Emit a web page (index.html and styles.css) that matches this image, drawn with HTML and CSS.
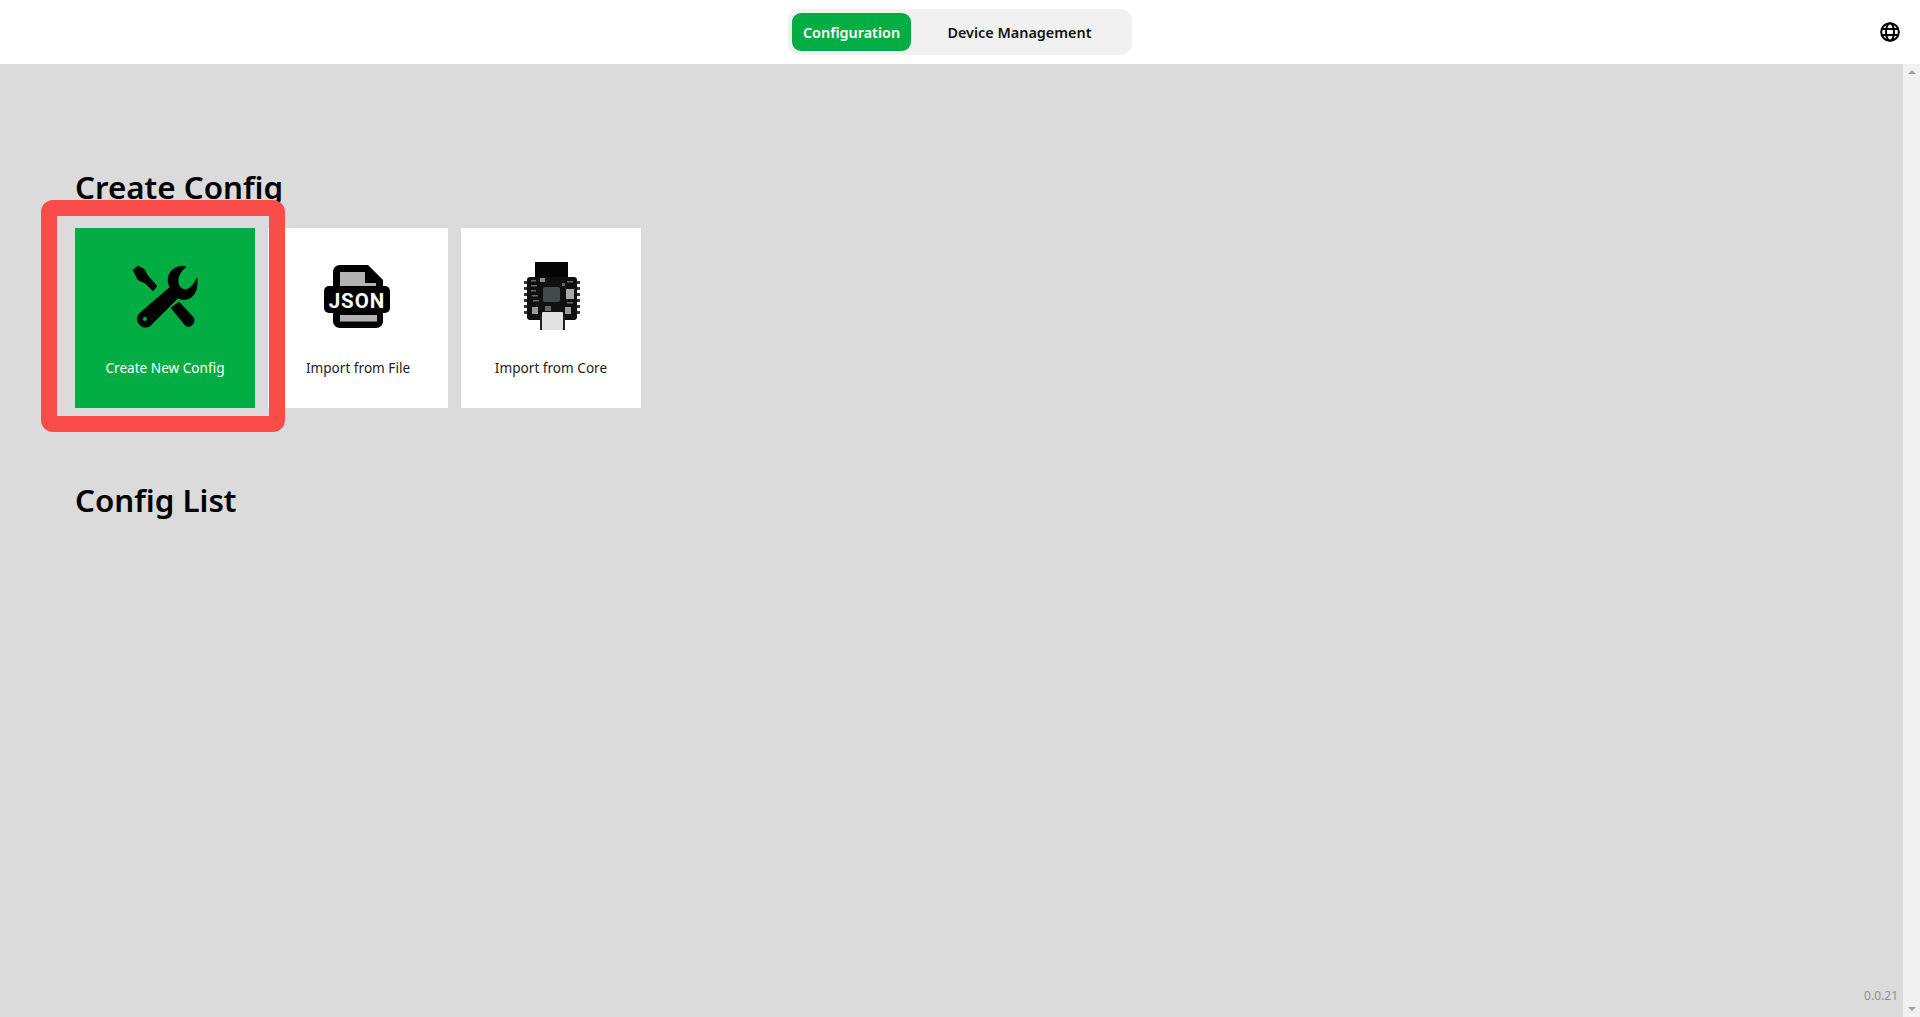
FILE: index.html
```html
<!DOCTYPE html>
<html lang="en">
<head>
  <meta charset="UTF-8">
  <meta name="viewport" content="width=device-width, initial-scale=1.0">
  <title>Configuration</title>
  <link rel="stylesheet" href="styles.css">
</head>
<body>
  <header class="topbar">
    <nav class="tabs">
      <a class="tab active" href="#">Configuration</a>
      <a class="tab" href="#">Device Management</a>
    </nav>
    <svg class="globe" viewBox="0 0 20 20" fill="none" stroke="#000" stroke-width="2">
      <circle cx="10" cy="10" r="8.800"/>
      <ellipse cx="10" cy="10" rx="4" ry="8.800"/>
      <path d="M2 7h16M2 13h16"/>
    </svg>
  </header>

  <div class="page">
    <main class="content">
      <h2 class="section-title">Create Config</h2>
      <div class="cards">
        <div class="card selected">
          <svg class="card-icon tools" viewBox="0 0 90 90">
            <path d="M13 20 L18 16 L24 19 L28 26 L37 36 L33 41 L25 33 L18 30 Z"/>
            <path d="M51 58 L59 52 L73 67 C75 70 74 73 72 75 C70 77 67 77 65 75 Z"/>
            <path fill-rule="evenodd" d="M66 17 C60 14 48 19 48 30 C48 33 49 35 50 37 L20 63 C16 67 17 72 20 75 C23 78 28 78 31 75 L58 48 C62 50 66 50 70 48 C76 45 78 36 77 28 C75 32 72 37 68 39 C63 41 58 37 58 31 C58 25 62 20 66 17 Z M25 66.500 A2.400 2.400 0 1 0 25 71.300 A2.400 2.400 0 1 0 25 66.500 Z"/>
          </svg>
          <span class="card-label">Create New Config</span>
        </div>
        <div class="card">
          <svg class="card-icon" viewBox="3 0 90 90">
            <path d="M30 15 H58 L73 30 V71 C73 75 70 78 66 78 H30 C26 78 23 75 23 71 V22 C23 18 26 15 30 15 Z"/>
            <path fill="#b3b3b3" d="M30 22 H55 V33 H66 V40 H30 Z"/>
            <rect x="30" y="65" width="37" height="6.500" fill="#b3b3b3"/>
            <rect x="14" y="36" width="66" height="27" rx="5"/>
            <text class="json-text" x="47" y="57.500" text-anchor="middle">JSON</text>
          </svg>
          <span class="card-label">Import from File</span>
        </div>
        <div class="card">
          <svg class="card-icon" viewBox="6 0 90 90">
            <rect x="35" y="12" width="33" height="18" fill="#050505"/>
            <path fill="#333" d="M24 31h4v3h-4zM24 37h4v3h-4zM24 43h4v3h-4zM24 49h4v3h-4zM24 55h4v3h-4zM24 61h4v3h-4zM76 31h4v3h-4zM76 37h4v3h-4zM76 43h4v3h-4zM76 49h4v3h-4zM76 55h4v3h-4zM76 61h4v3h-4z"/>
            <rect x="27" y="27" width="50" height="43" rx="3" fill="#101010"/>
            <rect x="43" y="37" width="17" height="15" rx="2" fill="#434a4c"/>
            <rect x="66" y="39" width="8" height="10" fill="#a8a8a8"/>
            <rect x="40" y="28" width="5" height="4" fill="#8a8a8a"/>
            <path fill="#666" d="M31 30h5v1.500h-5zM31 35h6v1.500h-6zM31 40h5v1.500h-5zM31 45h7v1.500h-5zM67 31h6v1.500h-6zM62 33h3v3h-3zM67 52h6v1.500h-6zM45 56h6v5h-6zM33 50h6v1.500h-6z"/>
            <rect x="32" y="57" width="6" height="7" fill="#9a9a9a"/>
            <rect x="65" y="57" width="6" height="7" fill="#9a9a9a"/>
            <rect x="40" y="66" width="25" height="14" fill="#222"/>
            <rect x="42" y="62" width="21" height="18" rx="1" fill="#e2e2e2"/>
          </svg>
          <span class="card-label">Import from Core</span>
        </div>
      </div>
      <h2 class="section-title list-title">Config List</h2>
    </main>
    <div class="scrollbar">
      <span class="arrow up"></span>
      <span class="arrow down"></span>
    </div>
    <div class="highlight"></div>
    <span class="version">0.0.21</span>
  </div>
</body>
</html>
```

FILE: styles.css
```css
html, body {
  height: 100%;
}

body {
  margin: 0;
  font-family: "Noto Sans", "Open Sans", sans-serif;
  background-color: #dbdbdb;
  overflow: hidden;
  display: flex;
  flex-direction: column;
}

.topbar {
  height: 64px;
  flex: none;
  background-color: #fff;
  display: flex;
  justify-content: center;
  align-items: center;
  position: relative;
}

.tabs {
  display: flex;
  align-items: center;
  width: 344px;
  height: 46px;
  box-sizing: border-box;
  padding: 4px;
  background-color: #f1f1f1;
  border-radius: 12px;
}

.tab {
  height: 38px;
  line-height: 40px;
  font-size: 14.400px;
  font-weight: 600;
  color: #111;
  text-decoration: none;
  text-align: center;
}

.tab.active {
  width: 119px;
  background-color: #02ad43;
  border-radius: 9px;
  color: #fff;
}

.tab:not(.active) {
  flex: 1;
}

.globe {
  position: absolute;
  right: 20px;
  top: 22px;
  width: 20px;
  height: 20px;
}

.page {
  flex: 1;
  display: flex;
  position: relative;
}

.content {
  flex: 1;
  padding: 95px 0 0 75px;
}

.section-title {
  margin: 0 0 12px;
  font-size: 31.300px;
  line-height: 57px;
  font-weight: 600;
  color: #000;
}

.list-title {
  margin-top: 64px;
}

.cards {
  display: flex;
  gap: 13px;
}

.card {
  width: 180px;
  height: 180px;
  box-sizing: border-box;
  padding-top: 22px;
  background-color: #fff;
  color: #222;
  display: flex;
  flex-direction: column;
  align-items: center;
}

.card.selected {
  background-color: #02ad43;
  color: #fff;
}

.card-icon {
  width: 90px;
  height: 90px;
}

.tools path {
  stroke: #000;
  stroke-width: 0.600;
}

.card-label {
  margin-top: 18px;
  font-size: 13.600px;
  line-height: 20px;
}

.json-text {
  font-family: Roboto, sans-serif;
  font-weight: 700;
  font-size: 20.500px;
  letter-spacing: 1px;
  fill: #fff;
}

.scrollbar {
  width: 17px;
  flex: none;
  background-color: #f1f1f1;
  display: flex;
  flex-direction: column;
  justify-content: space-between;
  align-items: center;
  padding: 6px 0;
}

.arrow {
  width: 0;
  height: 0;
  border-left: 4px solid transparent;
  border-right: 4px solid transparent;
}

.arrow.up {
  border-bottom: 4px solid #a3a3a3;
}

.arrow.down {
  border-top: 4px solid #a3a3a3;
}

.highlight {
  position: absolute;
  left: 41px;
  top: 136px;
  width: 244px;
  height: 232px;
  box-sizing: border-box;
  border: 16px solid #fa4d4a;
  border-radius: 12px;
}

.version {
  position: absolute;
  right: 22px;
  bottom: 13px;
  font-size: 12px;
  color: #8f8f8f;
}
```
